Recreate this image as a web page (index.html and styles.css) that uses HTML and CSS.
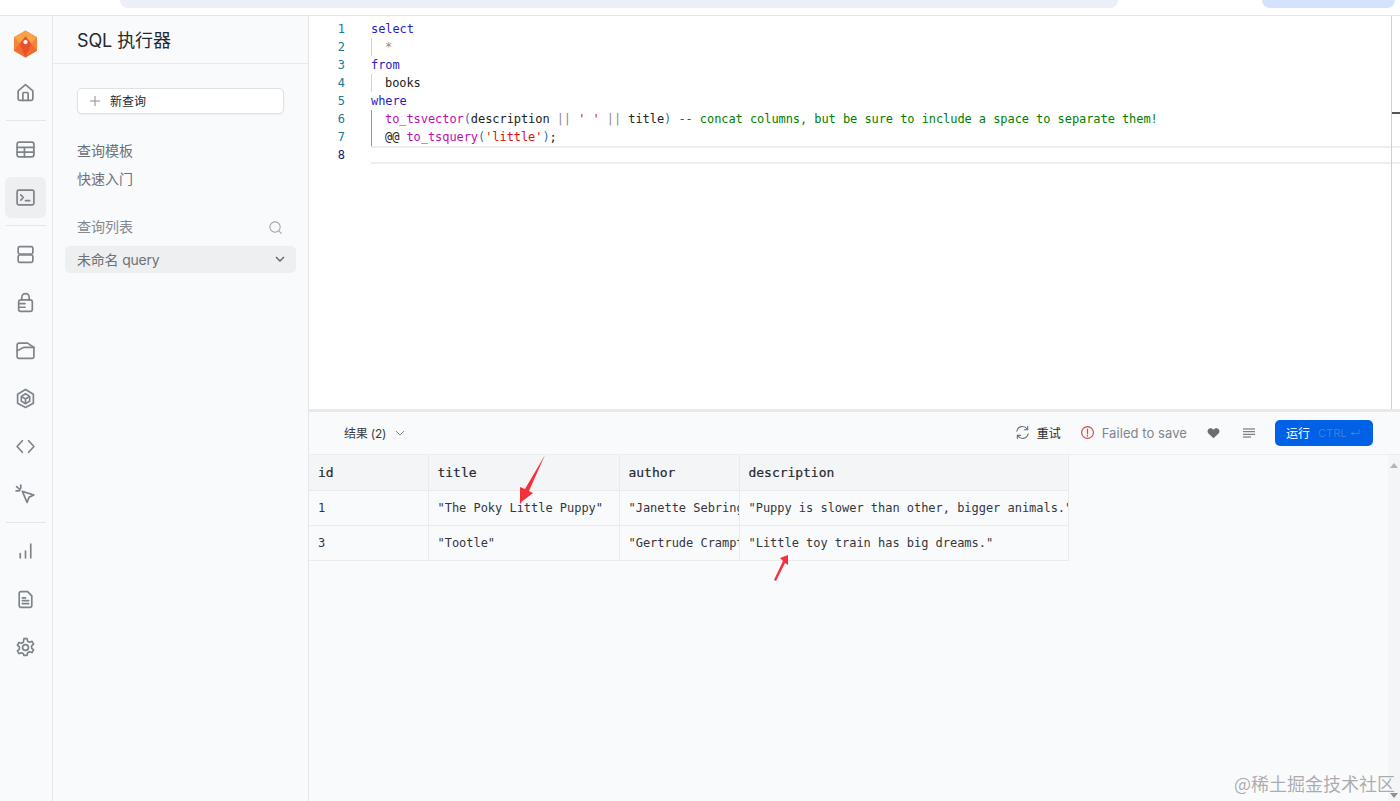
FILE: index.html
```html
<!DOCTYPE html>
<html lang="zh-CN">
<head>
    <meta charset="UTF-8">
    <meta name="viewport" content="width=device-width, initial-scale=1.0">
    <link rel="stylesheet" href="styles.css">
    <title>SQL 执行器</title>
</head>
<body class="main">

<div class="browser-strip">
    <div class="strip-address"></div>
    <div class="strip-pill"></div>
</div>

<div class="app">
    <nav class="rail">
        <div class="rail-logo">
            <svg width="25" height="28" viewBox="0 0 26 28">
                <polygon points="13,0 25,7 25,21 13,28 1,21 1,7" fill="#f4863c"/>
                <polygon points="13,0 25,7 19,13 13,6" fill="#f9a24c"/>
                <polygon points="1,7 13,0 13,6 7,13" fill="#f9a24c"/>
                <polygon points="1,21 7,13 13,28" fill="#f26c30"/>
                <polygon points="25,21 19,13 13,28" fill="#f26c30"/>
                <polygon points="13,6 19,14 13,28 7,14" fill="#e9502c"/>
                <circle cx="13" cy="12" r="2.200" fill="#fff"/>
            </svg>
        </div>
        <a class="rail-item"><svg class="icon" viewBox="0 0 20 20"><path d="M3 8.500 10 2.500l7 6V16a1.500 1.500 0 0 1-1.500 1.500h-11A1.500 1.500 0 0 1 3 16Z"/><path d="M7.500 17.500V11a1 1 0 0 1 1-1h3a1 1 0 0 1 1 1v6.500"/></svg></a>
        <hr class="rail-line">
        <a class="rail-item"><svg class="icon" viewBox="0 0 20 20"><rect x="2" y="3" width="16" height="14" rx="2"/><path d="M2 8h16M2 12.500h16M9 8v9"/></svg></a>
        <a class="rail-item active"><svg class="icon" viewBox="0 0 20 20"><rect x="2" y="3" width="16" height="14" rx="1.500"/><path d="m5.500 7.500 2.500 2.500-2.500 2.500M10 13h4"/></svg></a>
        <hr class="rail-line">
        <a class="rail-item"><svg class="icon" viewBox="0 0 20 20"><rect x="3" y="2.500" width="14" height="7" rx="1.500"/><rect x="3" y="10.500" width="14" height="7" rx="1.500"/></svg></a>
        <a class="rail-item"><svg class="icon" viewBox="0 0 20 20"><rect x="3.500" y="7.500" width="13" height="11" rx="2"/><path d="M6.500 7.500V5a3.500 3.500 0 0 1 7 0v2.500M3.500 11h6M3.500 14.500h6"/></svg></a>
        <a class="rail-item"><svg class="icon" viewBox="0 0 20 20"><path d="M2 5a2 2 0 0 1 2-2h8l6 4v9a1.500 1.500 0 0 1-1.500 1.500h-13A1.500 1.500 0 0 1 2 16Z"/><path d="M2 10c3 0 4-3 7-3h9"/></svg></a>
        <a class="rail-item"><svg class="icon" viewBox="0 0 20 20"><path d="M10 1.500 17.500 6v8.500L10 18.500 2.500 14.500V6Z"/><path d="M10 5.500 14 8v4.500L10 15 6 12.500V8ZM6 8l4 2.500L14 8M10 10.500V15"/></svg></a>
        <a class="rail-item"><svg class="icon" viewBox="0 0 20 20"><path d="M7 4.500 2 10l5 5.500M13 4.500l5 5.500-5 5.500"/></svg></a>
        <a class="rail-item"><svg class="icon" viewBox="0 0 20 20"><path d="m7 7 11 3.500-4.500 2-2 5ZM1.500 2.500l3.500 3M5.500 1v3M1 6.500h3"/></svg></a>
        <hr class="rail-line">
        <a class="rail-item"><svg class="icon" viewBox="0 0 20 20"><path d="M5 16v-4M10 16V9.500M15 16V3"/></svg></a>
        <a class="rail-item"><svg class="icon" viewBox="0 0 20 20"><path d="M4 4a1.500 1.500 0 0 1 1.500-1.500H12L16 6.500V16a1.500 1.500 0 0 1-1.500 1.500h-9A1.500 1.500 0 0 1 4 16ZM7 8.500h3M7 11h6M7 14h6"/></svg></a>
        <a class="rail-item"><svg class="icon" viewBox="0 0 20 20"><circle cx="10" cy="10" r="2.800"/><path d="M8.500 1.500h3l.5 2.500 1.800 1 2.400-.8 1.500 2.600-1.900 1.700v2l1.900 1.700-1.500 2.600-2.400-.8-1.800 1-.5 2.500h-3L8 16l-1.800-1-2.400.8-1.500-2.600 1.900-1.700v-2L2.300 7.800l1.500-2.600 2.400.8L8 5Z"/></svg></a>
    </nav>

    <aside class="sidebar">
        <h1 class="sidebar-title">SQL 执行器</h1>
        <div class="sidebar-body">
            <button class="new-query"><svg class="plus" viewBox="0 0 10 10"><path d="M5 0v10M0 5h10"/></svg><span>新查询</span></button>
            <div class="side-links">
                <a>查询模板</a>
                <a>快速入门</a>
            </div>
            <div class="list-head">
                <span>查询列表</span>
                <svg class="search" viewBox="0 0 16 16"><circle cx="7.500" cy="7.500" r="5.500"/><path d="m11.500 11.500 3 3"/></svg>
            </div>
            <div class="query-item">
                <span>未命名 query</span>
                <svg class="chev" viewBox="0 0 10 6"><path d="m1 1 4 4 4-4"/></svg>
            </div>
        </div>
    </aside>

    <main class="content">
        <section class="editor">
            <div class="code">
                <div class="line"><span class="num">1</span><span class="text kw">select</span></div>
                <div class="line"><span class="num">2</span><span class="text"><i class="guide"></i><span class="star">*</span></span></div>
                <div class="line"><span class="num">3</span><span class="text kw">from</span></div>
                <div class="line"><span class="num">4</span><span class="text"><i class="guide"></i>books</span></div>
                <div class="line"><span class="num">5</span><span class="text kw">where</span></div>
                <div class="line"><span class="num">6</span><span class="text"><i class="guide dark"></i><span class="fn">to_tsvector</span><span class="paren">(</span>description <span class="op">||</span> <span class="str">' '</span> <span class="op">||</span> title<span class="paren">)</span> <span class="cm">-- concat columns, but be sure to include a space to separate them!</span></span></div>
                <div class="line"><span class="num">7</span><span class="text"><i class="guide dark"></i>@@ <span class="fn">to_tsquery</span><span class="paren">(</span><span class="str">'little'</span><span class="paren">)</span>;</span></div>
                <div class="line current"><span class="num">8</span><span class="text"></span></div>
            </div>
            <div class="editor-scroll"><i class="scroll-mark"></i></div>
        </section>

        <section class="results">
            <div class="toolbar">
                <div class="result-tab">结果 (2)<svg class="chev light" viewBox="0 0 10 6"><path d="m1 1 4 4 4-4"/></svg></div>
                <div class="tools">
                    <span class="tool retry">
                        <svg class="tool-icon" viewBox="0 0 16 16"><path d="M2 6.500A6 6 0 0 1 13 4.500M14 9.500A6 6 0 0 1 3 11.500M13.500 1.500v3.500H10M2.500 14.500V11H6"/></svg>
                        重试
                    </span>
                    <span class="tool failed">
                        <svg class="tool-icon red" viewBox="0 0 16 16"><circle cx="8" cy="8" r="6.300"/><path d="M8 4.500v4.500M8 10.800v1"/></svg>
                        Failed to save
                    </span>
                    <svg class="heart" viewBox="0 0 16 14"><path d="M8 13.500 1.800 7.500C-.5 5 1 1 4.300 1 6 1 7.200 1.800 8 3c.8-1.200 2-2 3.700-2C15 1 16.500 5 14.200 7.500Z"/></svg>
                    <svg class="tool-icon format" viewBox="0 0 12 10"><path d="M0 1h12M0 3.700h12M0 6.300h12M0 9h8"/></svg>
                    <button class="run">运行<span class="shortcut">CTRL ↵</span></button>
                </div>
            </div>
            <div class="table-area">
                <table class="grid">
                    <thead>
                        <tr><th class="c-id">id</th><th class="c-title">title</th><th class="c-author">author</th><th class="c-desc">description</th></tr>
                    </thead>
                    <tbody>
                        <tr><td>1</td><td>"The Poky Little Puppy"</td><td><div class="clip">"Janette Sebring Lowrey"</div></td><td><div class="clip">"Puppy is slower than other, bigger animals."</div></td></tr>
                        <tr><td>3</td><td>"Tootle"</td><td><div class="clip">"Gertrude Crampton"</div></td><td><div class="clip">"Little toy train has big dreams."</div></td></tr>
                    </tbody>
                </table>
                <div class="table-scroll"><i class="arrow-up"></i><i class="arrow-down"></i></div>
            </div>
        </section>
    </main>
</div>

<svg class="mark mark-one" width="30" height="50" viewBox="0 0 30 50"><polygon points="28,0 12,36 16,38 3,48 3,32 8,34" fill="#f5323c"/></svg>
<svg class="mark mark-two" width="18" height="28" viewBox="0 0 18 28"><polygon points="15,1 7,4 10,7 1,26 3,27 12,9 15,11" fill="#f5323c"/></svg>
<div class="watermark">@稀土掘金技术社区</div>

</body>
</html>
```

FILE: styles.css
```css
* {
    box-sizing: border-box;
}

html, body {
    height: 100%;
}

.main {
    margin: 0;
    display: flex;
    flex-direction: column;
    height: 801px;
    overflow: hidden;
    position: relative;
    background-color: #fff;
    font-family: Inter, "Noto Sans CJK SC", sans-serif;
    color: #1f2328;
}

.browser-strip {
    height: 16px;
    display: flex;
    justify-content: space-between;
    padding: 0 5px 0 120px;
    border-bottom: 1px solid #e6e6e6;
    flex: none;
}

.strip-address {
    width: 998px;
    height: 8px;
    background-color: #eceff7;
    border-radius: 0 0 10px 10px;
}

.strip-pill {
    width: 133px;
    height: 8px;
    background-color: #d3e3fd;
    border-radius: 0 0 10px 10px;
}

.app {
    flex: 1;
    display: flex;
    min-height: 0;
}

/* left icon rail */
.rail {
    width: 53px;
    flex: none;
    display: flex;
    flex-direction: column;
    align-items: center;
    background-color: #f8fafc;
    border-right: 1px solid #e4e6ea;
    padding: 14px 1px 0 0;
}

.rail-logo {
    height: 28px;
    margin-bottom: 10px;
    display: flex;
    justify-content: center;
}

.rail-item {
    width: 41px;
    height: 41px;
    margin: 3.5px 0;
    display: flex;
    flex: none;
    align-items: center;
    justify-content: center;
    border-radius: 6px;
}

.rail-item.active {
    background-color: #eeeff1;
}

.rail-line {
    width: 40px;
    height: 1px;
    margin: 4px 0;
    border: 0;
    flex: none;
    background-color: #e4e6ea;
}

.icon {
    width: 21px;
    height: 21px;
    fill: none;
    stroke: #7e8489;
    stroke-width: 1.600;
    stroke-linecap: round;
    stroke-linejoin: round;
}

/* sidebar */
.sidebar {
    width: 256px;
    flex: none;
    background-color: #f8fafc;
    border-right: 1px solid #e4e6ea;
}

.sidebar-title {
    margin: 0;
    height: 48px;
    padding: 1px 0 0 24px;
    font-size: 18px;
    font-weight: 400;
    line-height: 47px;
    letter-spacing: -0.1px;
    border-bottom: 1px solid #e8eaed;
    color: #26292d;
}

.sidebar-body {
    padding: 24px 12px 0;
}

.new-query {
    display: flex;
    align-items: center;
    width: 207px;
    height: 26px;
    margin-left: 12px;
    padding: 0 0 2px 12px;
    background-color: #fff;
    border: 1px solid #dfe1e5;
    border-radius: 5px;
    box-shadow: 0 1px 2px rgba(0, 0, 0, 0.06);
    font-family: inherit;
    font-size: 12px;
    color: #26292d;
}

.plus {
    width: 10px;
    height: 10px;
    margin: 2px 10px 0 0;
    fill: none;
    stroke: #8a8e94;
    stroke-width: 1;
}

.side-links {
    display: flex;
    flex-direction: column;
    gap: 8px;
    margin: 27px 0 0 12px;
    font-size: 14px;
    line-height: 20px;
    color: #6d7278;
}

.list-head {
    display: flex;
    align-items: center;
    justify-content: space-between;
    margin: 28px 13px 0 12px;
    font-size: 14px;
    line-height: 20px;
    color: #85898f;
}

.search {
    width: 15px;
    height: 15px;
    fill: none;
    stroke: #a0a4a9;
    stroke-width: 1.100;
}

.query-item {
    display: flex;
    align-items: center;
    justify-content: space-between;
    height: 27px;
    margin-top: 9px;
    padding: 0 11px 2px 12px;
    background-color: #eeeff1;
    border-radius: 5px;
    font-size: 14px;
    letter-spacing: -0.2px;
    color: #6d7278;
}

.chev {
    width: 10px;
    height: 6px;
    fill: none;
    stroke: #5b6066;
    stroke-width: 1.300;
}

.chev.light {
    margin-left: 9px;
    stroke: #8a8e94;
    stroke-width: 1;
}

/* editor */
.content {
    flex: 1;
    min-width: 0;
    display: flex;
    flex-direction: column;
}

.editor {
    height: 396px;
    display: flex;
    flex: none;
    border-bottom: 3px solid #e7e9eb;
    background-color: #fff;
}

.code {
    flex: 1;
    min-width: 0;
    padding-top: 4px;
    font-family: "DejaVu Sans Mono", monospace;
    font-size: 12px;
    letter-spacing: -0.07px;
    color: #222;
}

.line {
    display: flex;
    height: 18px;
    line-height: 18px;
    white-space: pre;
}

.num {
    width: 36px;
    text-align: right;
    flex: none;
    color: #237893;
}

.line.current .num {
    color: #0b216f;
}

.text {
    margin-left: 26px;
    flex: 1;
    white-space: pre;
}

.line.current .text {
    margin-right: -9px;
    border-top: 2px solid #eeeeee;
    border-bottom: 2px solid #eeeeee;
}

.guide {
    display: inline-block;
    width: 14px;
    height: 18px;
    vertical-align: top;
    border-left: 1px solid #d3d3d3;
}

.guide.dark {
    border-left-color: #939393;
}

.kw {
    color: #2b1ac7;
}

.star {
    color: #8a8a8a;
}

.fn {
    color: #c00cb4;
}

.paren {
    color: #3a6fc4;
}

.op {
    color: #8a8a8a;
}

.str {
    color: #e01010;
}

.cm {
    color: #008000;
}

.editor-scroll {
    width: 9px;
    flex: none;
    border-left: 1px solid #d0d0d0;
    padding-top: 96px;
}

.scroll-mark {
    display: block;
    height: 2px;
    background-color: #555;
}

/* results */
.results {
    flex: 1;
    display: flex;
    flex-direction: column;
    min-height: 0;
    background-color: #f8fafc;
}

.toolbar {
    height: 43px;
    flex: none;
    display: flex;
    align-items: center;
    justify-content: space-between;
    padding: 0 27px 1px 35px;
    border-bottom: 1px solid #eceef0;
    font-size: 12px;
}

.result-tab {
    display: flex;
    align-items: center;
    letter-spacing: -0.2px;
    color: #3a3e44;
}

.tools {
    display: flex;
    align-items: center;
}

.tool {
    display: flex;
    align-items: center;
}

.tool-icon {
    width: 15px;
    height: 15px;
    fill: none;
    stroke: #6f7479;
    stroke-width: 1.200;
    stroke-linecap: round;
}

.retry {
    gap: 7px;
    color: #26292d;
}

.failed {
    gap: 7px;
    margin-left: 19px;
    font-size: 13px;
    letter-spacing: 0.07px;
    color: #80868c;
}

.tool-icon.red {
    stroke: #e0474c;
    stroke-width: 1.300;
}

.heart {
    width: 13px;
    height: 12px;
    margin-left: 20px;
    fill: #6a6e73;
}

.tool-icon.format {
    width: 12px;
    height: 10px;
    margin-left: 23px;
    stroke: #5f6368;
    stroke-width: 1;
    stroke-linecap: butt;
}

.run {
    display: flex;
    align-items: center;
    gap: 8px;
    width: 98px;
    height: 26px;
    margin-left: 20px;
    padding: 0 0 0 11px;
    border: 0;
    border-radius: 5px;
    background-color: #0060e6;
    font-family: inherit;
    font-size: 12px;
    color: #fff;
}

.shortcut {
    font-size: 11px;
    color: #3b7fd8;
}

.table-area {
    flex: 1;
    display: flex;
    justify-content: space-between;
    align-items: flex-start;
    min-height: 0;
}

.grid {
    border-collapse: collapse;
    table-layout: fixed;
    width: 759px;
    font-family: "DejaVu Sans Mono", monospace;
    font-size: 12px;
    letter-spacing: -0.03px;
    color: #33373c;
}

.grid th {
    height: 35px;
    padding: 0 9px;
    text-align: left;
    font-size: 13px;
    font-weight: 400;
    -webkit-text-stroke: 0.2px #26292d;
    color: #26292d;
    background-color: #f4f5f6;
    border: 1px solid #e9ebed;
    border-top: 0;
}

.grid td {
    height: 35px;
    padding: 0 0 0 9px;
    border: 1px solid #e9ebed;
    white-space: nowrap;
}

.grid th:first-child, .grid td:first-child {
    border-left: 0;
}

.c-id {
    width: 119px;
}

.c-title {
    width: 191px;
}

.c-author {
    width: 120px;
}

.c-desc {
    width: 329px;
}

.clip {
    overflow: hidden;
}

.table-scroll {
    width: 12px;
    height: 100%;
    flex: none;
    display: flex;
    flex-direction: column;
    justify-content: space-between;
    align-items: center;
    padding: 8px 0 3px;
    background-color: #f4f5f6;
}

.arrow-up {
    border: 4px solid transparent;
    border-top: 0;
    border-bottom: 5px solid #b4b6b9;
}

.arrow-down {
    border: 4px solid transparent;
    border-bottom: 0;
    border-top: 5px solid #8e9094;
}

/* annotations drawn over the screenshot */
.mark {
    position: absolute;
}

.mark-one {
    left: 517px;
    top: 455px;
}

.mark-two {
    left: 773px;
    top: 554px;
}

.watermark {
    position: absolute;
    right: 5px;
    bottom: 6px;
    font-family: "Noto Sans CJK SC", sans-serif;
    font-size: 18px;
    line-height: 24px;
    color: rgba(120, 120, 120, 0.6);
}
```
